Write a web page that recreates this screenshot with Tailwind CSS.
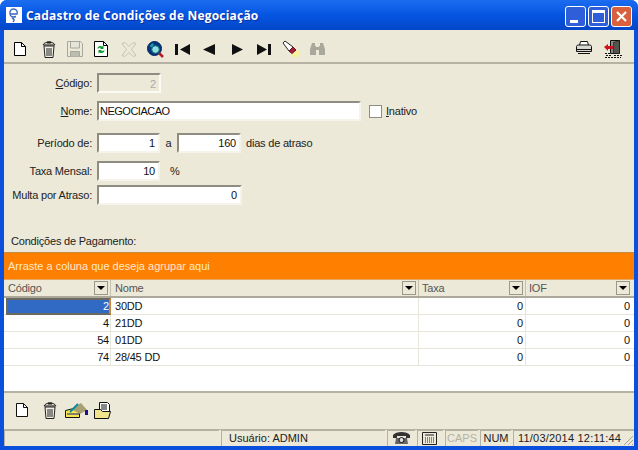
<!DOCTYPE html>
<html lang="pt-BR">
<head>
    <meta charset="UTF-8">
    <script src="https://cdn.jsdelivr.net/npm/@tailwindcss/browser@4"></script>
    <title>Cadastro de Condições de Negociação</title>
</head>
<body class="m-0 bg-white overflow-hidden">
<div class="w-[638px] h-[450px] flex flex-col rounded-t-[7px] overflow-hidden bg-[#0a50dc] font-['Liberation_Sans',sans-serif] text-[11px] leading-[13px] tracking-[-0.2px] text-[#222]">

    <!-- title bar -->
    <div class="h-[30px] shrink-0 flex items-center pl-[6px] pr-[6px] bg-gradient-to-b from-[#1c6cf0] via-[#0555e2] to-[#0446c8]">
        <div class="w-[16px] h-[16px] bg-white flex items-center justify-center">
            <svg width="14" height="16" viewBox="0 0 14 16" fill="none" stroke="#3a66c0" stroke-width="1.400"><path d="M3 7h7c1-3-1-5-3.500-5S2.500 4 3 7c.5 3 3 3.500 6 2.500"/><path d="M5 11c2 1 3 2 1 4"/></svg>
        </div>
        <span class="ml-[4px] text-[12px] font-bold text-white tracking-[0.2px] font-['Open_Sans',sans-serif] [text-shadow:1px_1px_0_#0a2f9c]">Cadastro de Condições de Negociação</span>
        <div class="ml-auto flex gap-[2px] mt-[3px]">
            <div class="w-[21px] h-[21px] rounded-[3px] border border-white bg-[#2f5fd8] relative"><div class="absolute left-[4px] bottom-[3px] w-[8px] h-[3px] bg-white"></div></div>
            <div class="w-[21px] h-[21px] rounded-[3px] border border-white bg-[#2f5fd8] flex items-center justify-center"><div class="w-[13px] h-[13px] border border-white border-t-[3px]"></div></div>
            <div class="w-[21px] h-[21px] rounded-[3px] border border-white bg-[#d9603c] flex items-center justify-center">
                <svg width="13" height="13" viewBox="0 0 13 13" stroke="#fff" stroke-width="2.200"><path d="M2 2l9 9M11 2l-9 9"/></svg>
            </div>
        </div>
    </div>

    <!-- window body -->
    <div class="mx-[4px] mb-[4px] flex-1 min-h-0 flex flex-col bg-[#ece9d8]">

        <!-- toolbar -->
        <div class="h-[34px] shrink-0 flex items-center pl-[10px] pr-[12px] pt-[6px] border-b-2 border-b-[#b5b2a3]">
            <svg width="12" height="14" viewBox="0 0 12 14"><path d="M.5.500h7l4 4v9H.5z" fill="#fff" stroke="#000"/><path d="M7.500.500v4h4" fill="none" stroke="#000"/></svg>
            <svg width="14" height="17" viewBox="0 0 14 17" class="ml-[16px]"><path d="M1 4c1-2 3-3 6-3s5 1 6 3z" fill="#d8d6c8" stroke="#222"/><path d="M5 1.500h4" stroke="#222" stroke-width="2"/><path d="M2 5h10l-1 11.500H3z" fill="#f0efe6" stroke="#222"/><path d="M5 7v8M7 7v8M9 7v8" stroke="#222"/></svg>
            <svg width="16" height="16" viewBox="0 0 16 16" class="ml-[11px]"><path d="M.5.500h13l2 2v13H.5z" fill="#ece9d8" stroke="#a8a79c"/><path d="M3.500 1v6h9V1" fill="#e6e5da" stroke="#a8a79c"/><path d="M3.500 15.500v-5h9v5" fill="#bdbcb1" stroke="#a8a79c"/></svg>
            <svg width="14" height="16" viewBox="0 0 14 16" class="ml-[11px]"><path d="M.5.500h9l4 4v11H.5z" fill="#fff" stroke="#000"/><path d="M9.500.500v4h4" fill="none" stroke="#000"/><path d="M3.500 8c0-2.500 2.500-4 5-2.500l1-1V8H6l1-1c-1-.5-2 0-3.500 1z" fill="#0a9a2a"/><path d="M10.500 9c0 2.500-2.500 4-5 2.500l-1 1V9H8l-1 1c1 .5 2 0 3.500-1z" fill="#0a9a2a"/></svg>
            <svg width="16" height="15" viewBox="0 0 16 15" class="ml-[13px]" fill="none" stroke="#c4c2b4"><path d="M1 1.500l3-1 4 4 4-4 3 1-4.500 6 4.500 6-3 1-4-4-4 4-3-1 4.500-6z"/></svg>
            <svg width="17" height="17" viewBox="0 0 17 17" class="ml-[10px]"><circle cx="7.500" cy="7.500" r="7" fill="#06357f" stroke="#04245c"/><circle cx="8.500" cy="8.500" r="3.800" fill="#8fdde0" stroke="#0c6a78"/><path d="M2.500 5l3-3 1.500 2-2.500 2.500z" fill="#1b9aa6"/><path d="M12 12l4 4" stroke="#b4202a" stroke-width="2.500"/></svg>
            <svg width="15" height="11" viewBox="0 0 15 11" class="ml-[11px]"><path d="M0 0h3v11H0zM15 0v11L5 5.500z" fill="#111"/></svg>
            <svg width="12" height="11" viewBox="0 0 12 11" class="ml-[13px]"><path d="M12 0v11L0 5.500z" fill="#111"/></svg>
            <svg width="11" height="11" viewBox="0 0 11 11" class="ml-[17px]"><path d="M0 0v11l11-5.500z" fill="#111"/></svg>
            <svg width="14" height="11" viewBox="0 0 14 11" class="ml-[14px]"><path d="M11 0h3v11h-3zM0 0v11l10-5.500z" fill="#111"/></svg>
            <svg width="18" height="18" viewBox="0 0 18 18" class="ml-[11px]"><circle cx="13.500" cy="13.500" r="4" fill="#f5f2a0"/><path d="M1 3l2-2 8 6-4 4z" fill="#fff" stroke="#222"/><path d="M7 11l4-4 3 3-4 3.500z" fill="#a81c3c" stroke="#6b0f22"/></svg>
            <svg width="15" height="14" viewBox="0 0 15 14" class="ml-[10px]" fill="#a9a89c"><path d="M2 1h3v3h1v9H0V7zM10 1h3l2 6v6H9V4h1zM6 5h3v3H6z"/></svg>
            <svg width="16" height="14" viewBox="0 0 16 14" class="ml-auto -mt-[2px]"><path d="M4.500.500h7l1 4h-9z" fill="#fff" stroke="#111"/><path d="M.5 5.500c0-1 1-1.500 2-1.500h11c1 0 2 .5 2 1.500v5H.5z" fill="#d8d8d0" stroke="#111"/><path d="M.5 8.500h15M2 12.500h12" stroke="#111"/></svg>
            <svg width="18" height="18" viewBox="0 0 18 18" class="ml-[12px]"><path d="M6.500.500h9v13h-9z" fill="#8a8a80" stroke="#111"/><path d="M9.500 2.500l6-2v13h-6z" fill="#55554f" stroke="#111" stroke-width=".6"/><path d="M0 7l4-3v2h5v3H4v2z" fill="#d0141c"/><path d="M1 13.500h5M2 15.500h6M1 17.500h16M10 15.500h8" stroke="#111" stroke-dasharray="2 1"/></svg>
        </div>

        <!-- form -->
        <div class="flex flex-col pt-[9px] shrink-0">
            <div class="flex items-center h-[20px]">
                <label class="w-[88px] text-right mr-[5px]"><span class="underline">C</span>ódigo:</label>
                <div class="w-[64px] h-[20px] px-[3px] text-right leading-[18px] text-[#aaa] bg-[#ece9d8] border-2 border-t-[#8f8d82] border-l-[#8f8d82] border-r-[#fbfaf5] border-b-[#fbfaf5]">2</div>
            </div>
            <div class="flex items-center h-[20px] mt-[8px]">
                <label class="w-[88px] text-right mr-[5px]"><span class="underline">N</span>ome:</label>
                <div class="w-[264px] h-[20px] px-[1px] leading-[17px] tracking-[-0.5px] text-[#111] bg-white border-2 border-t-[#8f8d82] border-l-[#8f8d82] border-r-[#f5f4ea] border-b-[#f5f4ea]">NEGOCIACAO</div>
                <div class="w-[13px] h-[13px] ml-[8px] bg-white border border-[#8f8d82]"></div>
                <span class="ml-[4px]"><span class="underline">I</span>nativo</span>
            </div>
            <div class="flex items-center h-[20px] mt-[12px]">
                <label class="w-[88px] text-right mr-[5px]">Período de:</label>
                <div class="w-[63px] h-[20px] px-[3px] text-right leading-[17px] text-[#111] bg-white border-2 border-t-[#8f8d82] border-l-[#8f8d82] border-r-[#f5f4ea] border-b-[#f5f4ea]">1</div>
                <span class="w-[17px] text-center">a</span>
                <div class="w-[64px] h-[20px] px-[3px] text-right leading-[17px] text-[#111] bg-white border-2 border-t-[#8f8d82] border-l-[#8f8d82] border-r-[#f5f4ea] border-b-[#f5f4ea]">160</div>
                <span class="ml-[5px]">dias de atraso</span>
            </div>
            <div class="flex items-center h-[20px] mt-[8px]">
                <label class="w-[88px] text-right mr-[5px]">Taxa Mensal:</label>
                <div class="w-[63px] h-[20px] px-[3px] text-right leading-[17px] text-[#111] bg-white border-2 border-t-[#8f8d82] border-l-[#8f8d82] border-r-[#f5f4ea] border-b-[#f5f4ea]">10</div>
                <span class="ml-[10px]">%</span>
            </div>
            <div class="flex items-center h-[20px] mt-[4px]">
                <label class="w-[88px] text-right mr-[5px]">Multa por Atraso:</label>
                <div class="w-[145px] h-[20px] px-[3px] text-right leading-[17px] text-[#111] bg-white border-2 border-t-[#8f8d82] border-l-[#8f8d82] border-r-[#f5f4ea] border-b-[#f5f4ea]">0</div>
            </div>
            <p class="ml-[7px] mt-[30px]">Condições de Pagamento:</p>
        </div>

        <!-- grid -->
        <div class="mt-[4px] h-[28px] shrink-0 flex items-center pl-[4px] bg-[#ff8000] border-t border-t-[#c98a3e] border-b border-b-[#e8a860] text-[#ffe8c8] tracking-normal">Arraste a coluna que deseja agrupar aqui</div>
        <div class="h-[113px] shrink-0 bg-white border-b-2 border-b-[#b5b2a3] text-[#111]">
            <div class="grid grid-cols-[107px_308px_107px_1fr] h-[18px] bg-[#ece9d8] border-b-2 border-b-[#aca899] text-[#555]">
                <div class="flex items-center pl-[4px] pr-[2px] border-r border-r-[#c4c1b1]"><span>Código</span><span class="ml-auto w-[14px] h-[14px] flex items-center justify-center border border-[#9a9889]"><i class="border-x-[4px] border-x-transparent border-t-[4px] border-t-black"></i></span></div>
                <div class="flex items-center pl-[4px] pr-[2px] border-r border-r-[#c4c1b1]"><span>Nome</span><span class="ml-auto w-[14px] h-[14px] flex items-center justify-center border border-[#9a9889]"><i class="border-x-[4px] border-x-transparent border-t-[4px] border-t-black"></i></span></div>
                <div class="flex items-center pl-[3px] pr-[2px] border-r border-r-[#c4c1b1]"><span>Taxa</span><span class="ml-auto w-[14px] h-[14px] flex items-center justify-center border border-[#9a9889]"><i class="border-x-[4px] border-x-transparent border-t-[4px] border-t-black"></i></span></div>
                <div class="flex items-center pl-[3px] pr-[4px]"><span>IOF</span><span class="ml-auto w-[14px] h-[14px] flex items-center justify-center border border-[#9a9889]"><i class="border-x-[4px] border-x-transparent border-t-[4px] border-t-black"></i></span></div>
            </div>
            <div class="grid grid-cols-[107px_308px_107px_1fr] h-[17px] leading-[16px] border-b border-b-[#e8e6da]">
                <div class="text-right ml-[2px] bg-[#316ac5] text-white border-2 border-[#6b6a60] border-r-[#c98a3e] leading-[13px]">2</div>
                <div class="pl-[4px] border-r border-r-[#e8e6da]">30DD</div>
                <div class="text-right pr-[2px] border-r border-r-[#e8e6da]">0</div>
                <div class="text-right pr-[4px]">0</div>
            </div>
            <div class="grid grid-cols-[107px_308px_107px_1fr] h-[17px] leading-[16px] border-b border-b-[#e8e6da]">
                <div class="text-right pr-[1px] border-r border-r-[#e8e6da]">4</div>
                <div class="pl-[4px] border-r border-r-[#e8e6da]">21DD</div>
                <div class="text-right pr-[2px] border-r border-r-[#e8e6da]">0</div>
                <div class="text-right pr-[4px]">0</div>
            </div>
            <div class="grid grid-cols-[107px_308px_107px_1fr] h-[17px] leading-[16px] border-b border-b-[#e8e6da]">
                <div class="text-right pr-[1px] border-r border-r-[#e8e6da]">54</div>
                <div class="pl-[4px] border-r border-r-[#e8e6da]">01DD</div>
                <div class="text-right pr-[2px] border-r border-r-[#e8e6da]">0</div>
                <div class="text-right pr-[4px]">0</div>
            </div>
            <div class="grid grid-cols-[107px_308px_107px_1fr] h-[17px] leading-[16px] border-b border-b-[#e8e6da]">
                <div class="text-right pr-[1px] border-r border-r-[#e8e6da]">74</div>
                <div class="pl-[4px] border-r border-r-[#e8e6da]">28/45 DD</div>
                <div class="text-right pr-[2px] border-r border-r-[#e8e6da]">0</div>
                <div class="text-right pr-[4px]">0</div>
            </div>
        </div>

        <!-- bottom toolbar -->
        <div class="flex-1 flex items-center pl-[12px] pb-[2px]">
            <svg width="12" height="14" viewBox="0 0 12 14"><path d="M.5.500h7l4 4v9H.5z" fill="#fff" stroke="#111"/><path d="M7.500.500v4h4" fill="none" stroke="#111"/></svg>
            <svg width="14" height="17" viewBox="0 0 14 17" class="ml-[15px]"><path d="M1 4c1-2 3-3 6-3s5 1 6 3z" fill="#d8d6c8" stroke="#222"/><path d="M5 1.500h4" stroke="#222" stroke-width="2"/><path d="M2 5h10l-1 11.500H3z" fill="#f0efe6" stroke="#222"/><path d="M5 7v8M7 7v8M9 7v8" stroke="#222"/></svg>
            <svg width="23" height="16" viewBox="0 0 23 16" class="ml-[8px]"><path d="M.5 8.500l8-2h6v9H.5z" fill="#f6e84a" stroke="#111"/><path d="M6 7l10-6 6 7-7 4z" fill="#a8a070"/><path d="M5 10l8-8" stroke="#0a8aa0" stroke-width="2"/><path d="M20 8h3v5h-3z" fill="#14148c"/><path d="M2 12h12" stroke="#14148c"/></svg>
            <svg width="17" height="17" viewBox="0 0 17 17" class="ml-[6px]"><path d="M5.500.500h8l2 2v9h-10z" fill="#fff" stroke="#111"/><path d="M7 3h6M7 5h6M7 7h6" stroke="#111"/><path d="M.5 7.500h6l2 2h8l-2 7H.5z" fill="#f0e48c" stroke="#111"/></svg>
        </div>

        <!-- status bar -->
        <div class="h-[17px] shrink-0 flex border-t border-t-[#b5b2a3] gap-[2px] tracking-normal">
            <div class="w-[215px] border-t border-l border-[#b5b2a3]"></div>
            <div class="w-[164px] pl-[7px] border-t border-l border-[#b5b2a3] leading-[14px]">Usuário: ADMIN</div>
            <div class="w-[28px] pl-[5px] pt-[1px] border-t border-l border-[#b5b2a3]">
                <svg width="17" height="13" viewBox="0 0 17 13"><path d="M0 3c3-4 14-4 17 0v3h-4V4H4v2H0z" fill="#333"/><path d="M3 6h11l1 6H2z" fill="#666"/><circle cx="8.500" cy="8" r="2.500" fill="#ddd" stroke="#111"/></svg>
            </div>
            <div class="w-[26px] pl-[4px] pt-[1px] border-t border-l border-[#b5b2a3]">
                <svg width="15" height="13" viewBox="0 0 15 13" fill="none" stroke="#222"><path d="M.5.500h14v12H.5zM3 3h9"/><path d="M3 6h9M3 8h9M3 10h9" stroke-dasharray="1 1"/></svg>
            </div>
            <div class="w-[33px] text-center border-t border-l border-[#b5b2a3] text-[#b5b3a6] leading-[14px]">CAPS</div>
            <div class="w-[31px] text-center border-t border-l border-[#b5b2a3] leading-[14px]">NUM</div>
            <div class="flex-1 flex pl-[4px] border-t border-l border-[#b5b2a3] leading-[14px] tracking-[0.2px]">
                <span>11/03/2014 12:11:44</span>
                <svg width="12" height="12" viewBox="0 0 12 12" class="ml-auto mt-[3px]" stroke="#a8a596"><path d="M11 2L2 11M11 6l-5 5M11 10l-1 1"/></svg>
            </div>
        </div>
    </div>
</div>
</body>
</html>
